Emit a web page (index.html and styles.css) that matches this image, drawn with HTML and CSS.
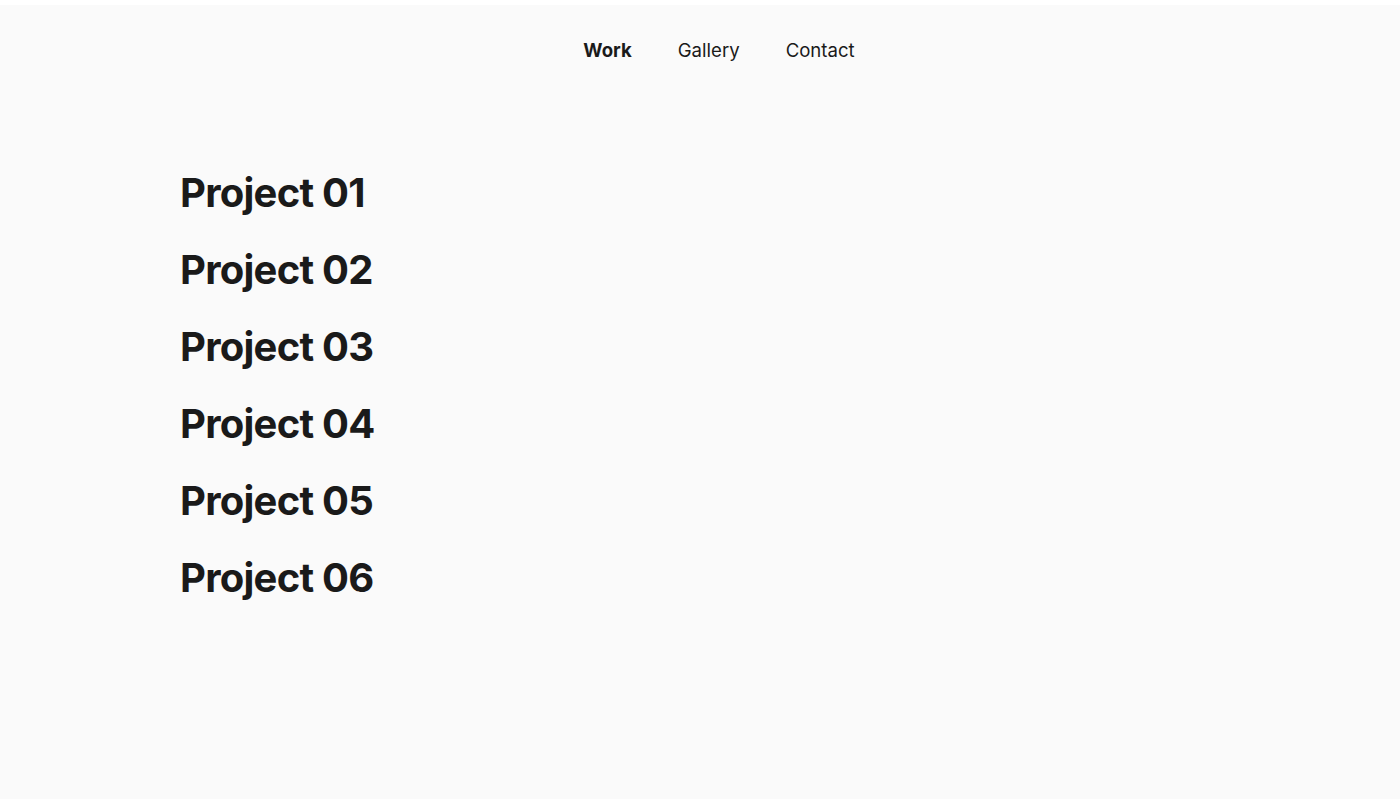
FILE: index.html
```html
<!DOCTYPE html>
<html lang="en">
<head>
<meta charset="utf-8">
<title>Work</title>
<link rel="stylesheet" href="styles.css">
</head>
<body>
<header class="top">
  <nav class="nav">
    <a class="nav-link active" href="#">Work</a>
    <a class="nav-link" href="#">Gallery</a>
    <a class="nav-link" href="#">Contact</a>
  </nav>
</header>
<main class="projects">
  <a class="project" href="#">Project 01</a>
  <a class="project" href="#">Project 02</a>
  <a class="project" href="#">Project 03</a>
  <a class="project" href="#">Project 04</a>
  <a class="project" href="#">Project 05</a>
  <a class="project" href="#">Project 06</a>
</main>
</body>
</html>
```
FILE: styles.css
```css
html, body {
  margin: 0;
  padding: 0;
}
body {
  background: #fafafa;
  border-top: 5px solid #ffffff;
  font-family: Inter, "Liberation Sans", sans-serif;
  color: #1a1a1a;
  min-height: 794px;
}
.top {
  padding-top: 29px;
}
.nav {
  display: flex;
  justify-content: center;
  gap: 46px;
  padding-left: 38px;
}
.nav-link {
  font-size: 18.6px;
  line-height: 32px;
  color: #1a1a1a;
  text-decoration: none;
  font-weight: 400;
}
.nav-link.active {
  font-weight: 700;
}
.projects {
  display: flex;
  flex-direction: column;
  align-items: flex-start;
  padding: 88px 0 0 180px;
}
.project {
  font-size: 40px;
  font-weight: 700;
  line-height: 77px;
  color: #1a1a1a;
  text-decoration: none;
  letter-spacing: -0.75px;
}
```
